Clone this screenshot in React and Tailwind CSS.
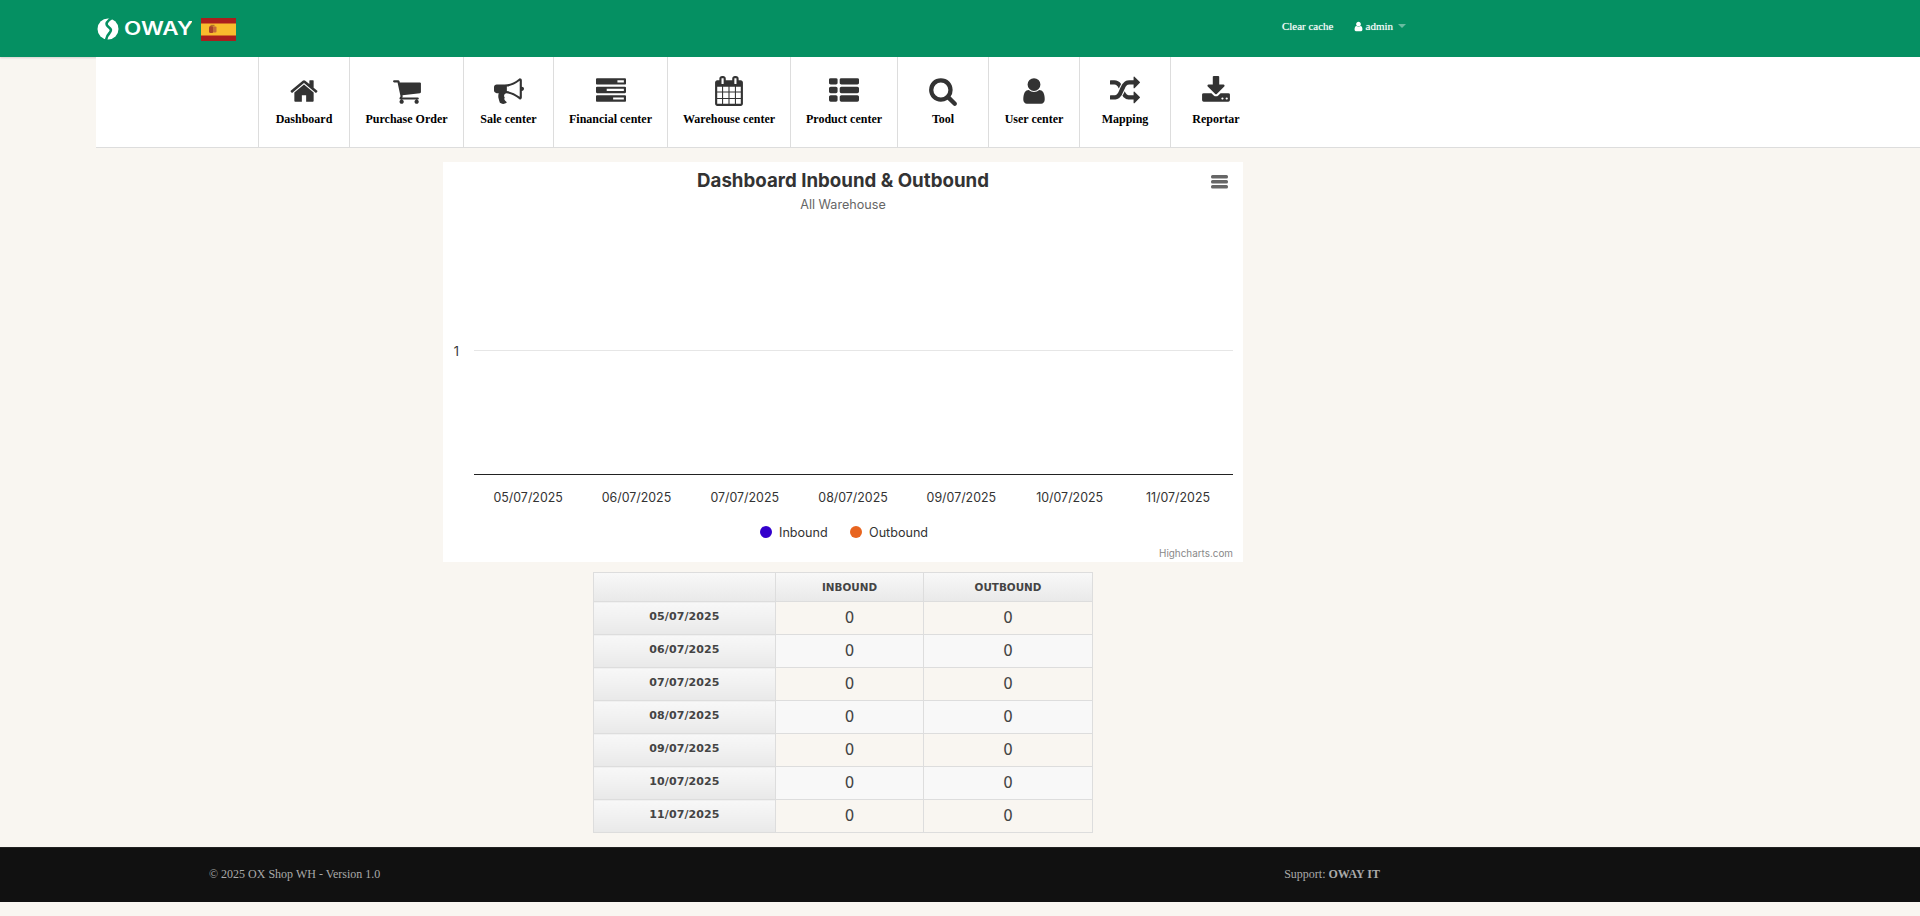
const icons = {
  home: "M1472 992v480q0 26-19 45t-45 19h-384v-384h-256v384h-384q-26 0-45-19t-19-45v-480q0-1 .5-3t.5-3l575-474 575 474q1 2 1 6zm223-69l-62 74q-8 9-21 11h-3q-13 0-21-7l-692-577-692 577q-12 8-24 7-13-2-21-11l-62-74q-8-10-7-23.5t11-21.5l719-599q32-26 76-26t76 26l244 204v-195q0-14 9-23t23-9h192q14 0 23 9t9 23v408l219 182q10 8 11 21.5t-7 23.5z",
  cart: "M704 1536q0 52-38 90t-90 38-90-38-38-90 38-90 90-38 90 38 38 90zm896 0q0 52-38 90t-90 38-90-38-38-90 38-90 90-38 90 38 38 90zm128-1088v512q0 24-16.5 42.5t-40.5 21.5l-1044 122q13 60 13 70 0 16-24 64h920q26 0 45 19t19 45-19 45-45 19h-1024q-26 0-45-19t-19-45q0-11 8-31.5t16-36 21.5-40 15.5-29.5l-177-823h-204q-26 0-45-19t-19-45 19-45 45-19h256q16 0 28.5 6.5t19.5 15.5 13 24.5 8 26 5.5 29.5 4.5 26h1201q26 0 45 19t19 45z",
  bullhorn: "M1664 640q53 0 90.5 37.5t37.5 90.5-37.5 90.5-90.5 37.5v384q0 52-38 90t-90 38q-417-347-812-380-58 19-91 66t-31 100.5 40 92.5q-20 33-23 65.5t6 58 33.5 55 48 50 61.5 50.5q-29 58-111.5 83t-168.5 11.5-132-55.5q-7-23-29.5-87.5t-32-94.5-23-89-15-101 3.5-98.5 22-110.5h-122q-66 0-113-47t-47-113v-192q0-66 47-113t113-47h480q435 0 896-384 52 0 90 38t38 90v384zm-128 604v-954q-394 302-768 343v270q377 42 768 341z",
  tasks: "M1024 1408h640v-128h-640v128zm-384-512h1024v-128h-1024v128zm640-512h384v-128h-384v128zm512 832v256q0 26-19 45t-45 19h-1664q-26 0-45-19t-19-45v-256q0-26 19-45t45-19h1664q26 0 45 19t19 45zm0-512v256q0 26-19 45t-45 19h-1664q-26 0-45-19t-19-45v-256q0-26 19-45t45-19h1664q26 0 45 19t19 45zm0-512v256q0 26-19 45t-45 19h-1664q-26 0-45-19t-19-45v-256q0-26 19-45t45-19h1664q26 0 45 19t19 45z",
  calendar: "M192 1664h288v-288h-288v288zm352 0h320v-288h-320v288zm-352-352h288v-320h-288v320zm352 0h320v-320h-320v320zm-352-384h288v-288h-288v288zm736 736h320v-288h-320v288zm-384-736h320v-288h-320v288zm768 736h288v-288h-288v288zm-384-352h320v-320h-320v320zm-352-864v-288q0-13-9.5-22.5t-22.5-9.5h-64q-13 0-22.5 9.5t-9.5 22.5v288q0 13 9.5 22.5t22.5 9.5h64q13 0 22.5-9.5t9.5-22.5zm736 864h288v-320h-288v320zm-384-384h320v-288h-320v288zm384 0h288v-288h-288v288zm32-480v-288q0-13-9.5-22.5t-22.5-9.5h-64q-13 0-22.5 9.5t-9.5 22.5v288q0 13 9.5 22.5t22.5 9.5h64q13 0 22.5-9.5t9.5-22.5zm384-64v1280q0 52-38 90t-90 38h-1408q-52 0-90-38t-38-90v-1280q0-52 38-90t90-38h128v-96q0-66 47-113t113-47h64q66 0 113 47t47 113v96h384v-96q0-66 47-113t113-47h64q66 0 113 47t47 113v96h128q52 0 90 38t38 90z",
  thList: "M512 1248v192q0 40-28 68t-68 28h-320q-40 0-68-28t-28-68v-192q0-40 28-68t68-28h320q40 0 68 28t28 68zm0-512v192q0 40-28 68t-68 28h-320q-40 0-68-28t-28-68v-192q0-40 28-68t68-28h320q40 0 68 28t28 68zm1280 512v192q0 40-28 68t-68 28h-960q-40 0-68-28t-28-68v-192q0-40 28-68t68-28h960q40 0 68 28t28 68zm-1280-1024v192q0 40-28 68t-68 28h-320q-40 0-68-28t-28-68v-192q0-40 28-68t68-28h320q40 0 68 28t28 68zm1280 512v192q0 40-28 68t-68 28h-960q-40 0-68-28t-28-68v-192q0-40 28-68t68-28h960q40 0 68 28t28 68zm0-512v192q0 40-28 68t-68 28h-960q-40 0-68-28t-28-68v-192q0-40 28-68t68-28h960q40 0 68 28t28 68z",
  search: "M1216 832q0-185-131.5-316.5t-316.5-131.5-316.5 131.5-131.5 316.5 131.5 316.5 316.5 131.5 316.5-131.5 131.5-316.5zm512 832q0 52-38 90t-90 38q-54 0-90-38l-343-342q-179 124-399 124-143 0-273.5-55.5t-225-150-150-225-55.5-273.5 55.5-273.5 150-225 225-150 273.5-55.5 273.5 55.5 225 150 150 225 55.5 273.5q0 220-124 399l343 343q37 37 37 90z",
  user: "M1536 1399q0 109-62.5 187t-150.5 78h-854q-88 0-150.5-78t-62.5-187q0-85 8.5-160.5t31.5-152 58.5-131 94-89 134.5-34.5q131 128 313 128t313-128q76 0 134.5 34.5t94 89 58.5 131 31.5 152 8.5 160.5zm-256-887q0 159-112.5 271.5t-271.5 112.5-271.5-112.5-112.5-271.5 112.5-271.5 271.5-112.5 271.5 112.5 112.5 271.5z",
  random: "M666 481q-60 92-137 273-22-45-37-72.5t-40.5-63.5-51-56.5-63-35-81.5-14.5h-224q-14 0-23-9t-9-23v-192q0-14 9-23t23-9h224q250 0 410 225zm1126 799q0 14-9 23l-320 320q-9 9-23 9-13 0-22.5-9.5t-9.5-22.5v-192q-32 0-85 .5t-81 1-73-1-71-5-64-10.5-63-18.5-58-28.5-59-40-55-53.5-56-69.5q59-93 136-273 22 45 37 72.5t40.5 63.5 51 56.5 63 35 81.5 14.5h256v-192q0-14 9-23t23-9q12 0 24 10l319 319q9 9 9 23zm0-896q0 14-9 23l-320 320q-9 9-23 9-13 0-22.5-9.5t-9.5-22.5v-192h-256q-48 0-87 15t-69 45-51 61.5-45 77.5q-32 62-78 171-29 66-49.5 111t-54 105-64 100-74 83-90 68.5-106.5 42-128 16.5h-224q-14 0-23-9t-9-23v-192q0-14 9-23t23-9h224q48 0 87-15t69-45 51-61.5 45-77.5q32-62 78-171 29-66 49.5-111t54-105 64-100 74-83 90-68.5 106.5-42 128-16.5h256v-192q0-14 9-23t23-9q12 0 24 10l319 319q9 9 9 23z",
  download: "M1344 1344q0-26-19-45t-45-19-45 19-19 45 19 45 45 19 45-19 19-45zm256 0q0-26-19-45t-45-19-45 19-19 45 19 45 45 19 45-19 19-45zm128-224v320q0 40-28 68t-68 28h-1472q-40 0-68-28t-28-68v-320q0-40 28-68t68-28h465l135 136q58 56 136 56t136-56l136-136h464q40 0 68 28t28 68zm-325-569q17 41-14 70l-448 448q-18 19-45 19t-45-19l-448-448q-31-29-14-70 17-39 59-39h256v-448q0-26 19-45t45-19h256q26 0 45 19t19 45v448h256q42 0 59 39z",
};

const menu = [
  { label: "Dashboard", icon: icons.home, width: "w-[91px]" },
  { label: "Purchase Order", icon: icons.cart, width: "w-[114px]" },
  { label: "Sale center", icon: icons.bullhorn, width: "w-[90px]" },
  { label: "Financial center", icon: icons.tasks, width: "w-[114px]" },
  { label: "Warehouse center", icon: icons.calendar, width: "w-[123px]" },
  { label: "Product center", icon: icons.thList, width: "w-[107px]" },
  { label: "Tool", icon: icons.search, width: "w-[91px]" },
  { label: "User center", icon: icons.user, width: "w-[91px]" },
  { label: "Mapping", icon: icons.random, width: "w-[91px]" },
  { label: "Reportar", icon: icons.download, width: "w-[91px]" },
];

const dates = ["05/07/2025", "06/07/2025", "07/07/2025", "08/07/2025", "09/07/2025", "10/07/2025", "11/07/2025"];

function FaIcon({ d, className }) {
  return (
    <svg viewBox="0 0 1792 1792" className={className} fill="currentColor">
      <path d={d} />
    </svg>
  );
}

function Logo() {
  return (
    <svg width="95" height="24" viewBox="0 0 95 24" className="block">
      <circle cx="11" cy="12" r="10.5" fill="#ffffff" />
      <path d="M15 1 C10 4 8 7 11 9.5 C14 12 15 13 12.5 16 C10.5 18 9.5 20 9 23" fill="none" stroke="#059062" strokeWidth="2.6" />
      <text x="27" y="18" textLength="69" lengthAdjust="spacingAndGlyphs" fontFamily="Inter, sans-serif" fontSize="18" fontWeight="600" fill="#ffffff">OWAY</text>
    </svg>
  );
}

function Flag() {
  return (
    <svg viewBox="0 0 35 23" className="ml-[9px] w-[35px] h-[23px]">
      <rect width="35" height="23" fill="#aa1f1d" />
      <rect y="5.5" width="35" height="12" fill="#f9bc2d" />
      <rect x="8" y="8" width="4.5" height="7" rx="1.5" fill="#a8412a" />
      <rect x="12" y="8.5" width="3.5" height="6" rx="1" fill="#c46a3a" />
      <rect x="9.5" y="6.8" width="4" height="1.6" fill="#b3702c" />
    </svg>
  );
}

function Chart() {
  const x0 = 31;
  return (
    <svg width="800" height="400" className="block bg-white font-['Inter',sans-serif]">
      <text x="400" y="25" textAnchor="middle" fontSize="18.7" fontWeight="700" fill="#333333">Dashboard Inbound &amp; Outbound</text>
      <text x="400" y="47" textAnchor="middle" fontSize="12.6" fill="#666666">All Warehouse</text>
      <g fill="#666666">
        <rect x="768" y="13" width="17" height="3.5" rx="1.5" />
        <rect x="768" y="18" width="17" height="3.5" rx="1.5" />
        <rect x="768" y="23" width="17" height="3.5" rx="1.5" />
      </g>
      <text x="16" y="193.5" textAnchor="end" fontSize="12.8" fill="#333333">1</text>
      <line x1={x0} x2="790" y1="188.5" y2="188.5" stroke="#e6e6e6" />
      <line x1={x0} x2="790" y1="312.5" y2="312.5" stroke="#222222" />
      {dates.map((date, i) => (
        <text key={date} x={x0 + 54.15 + i * 108.3} y="340" textAnchor="middle" fontSize="12.4" fill="#333333">{date}</text>
      ))}
      <circle cx="323" cy="370" r="6" fill="#3300cc" />
      <text x="336" y="375" fontSize="12.6" fill="#333333">Inbound</text>
      <circle cx="413" cy="370" r="6" fill="#e8641f" />
      <text x="426" y="375" fontSize="12.6" fill="#333333">Outbound</text>
      <text x="790" y="395" textAnchor="end" fontSize="9.9" fill="#888888">Highcharts.com</text>
    </svg>
  );
}

export default function App() {
  return (
    <div className="min-h-[916px] bg-[#f9f6f1] font-['Liberation_Serif',serif]">
      <header className="flex h-[57px] items-start justify-between bg-[#059062] shadow-[0_1px_2px_rgba(0,0,0,0.15)]">
        <div className="ml-[97px] mt-[17px] flex items-center">
          <Logo />
          <Flag />
        </div>
        <div className="mr-[514px] mt-[18px] flex items-center text-[11px] leading-[16px] text-white [text-shadow:0_0_1px_rgba(255,255,255,0.6)]">
          <span>Clear cache</span>
          <span className="ml-[19px] flex items-center gap-[2px]">
            <FaIcon d={icons.user} className="w-[11px] h-[11px]" />
            admin
          </span>
          <span className="ml-[5px] h-0 w-0 border-x-[4px] border-t-[4px] border-x-transparent border-t-white/40" />
        </div>
      </header>

      <nav className="ml-[96px] flex h-[91px] border-b border-[#dddddd] bg-white pl-[162px]">
        {menu.map((item) => (
          <div key={item.label} className={`${item.width} h-[90px] flex flex-col items-center border-l border-[#dddddd] pt-[19px] text-black`}>
            <FaIcon d={item.icon} className="w-[30px] h-[30px] text-[#333333]" />
            <span className="mt-[4px] text-[12px] leading-[18px] font-bold whitespace-nowrap">{item.label}</span>
          </div>
        ))}
      </nav>

      <main className="ml-[443px] mt-[14px] w-[800px]">
        <Chart />
        <table className="ml-[150px] mt-[10px] w-[500px] table-fixed border-collapse font-['DejaVu_Sans',sans-serif] text-[#444444]">
          <thead>
            <tr className="h-[29px] bg-gradient-to-b from-[#f8f8f8] to-[#e9e9e9] text-[10.4px] font-bold">
              <th className="w-[182px] border border-[#dddddd]"></th>
              <th className="w-[148px] border border-[#dddddd] pt-[1px]">INBOUND</th>
              <th className="border border-[#dddddd] pt-[1px]">OUTBOUND</th>
            </tr>
          </thead>
          <tbody>
            {dates.map((date, i) => (
              <tr key={date} className={`h-[33px] ${i % 2 === 0 ? "bg-[#f9f6f1]" : "bg-[#f8f8f8]"}`}>
                <th className="border border-[#dddddd] bg-gradient-to-b from-[#f8f8f8] to-[#e9e9e9] pb-[2px] text-[11px] font-bold tracking-[0.1px]">{date}</th>
                <td className="border border-[#dddddd] pt-[1px] text-center text-[15px]">0</td>
                <td className="border border-[#dddddd] pt-[1px] text-center text-[15px]">0</td>
              </tr>
            ))}
          </tbody>
        </table>
      </main>

      <footer className="mt-[14px] flex h-[55px] items-center justify-between border-t border-[#222222] bg-[#111111] pb-[2px] pl-[209px] pr-[540px] text-[12px] text-[#aaaaaa]">
        <span>© 2025 OX Shop WH - Version 1.0</span>
        <span>Support: <b>OWAY IT</b></span>
      </footer>
    </div>
  );
}
